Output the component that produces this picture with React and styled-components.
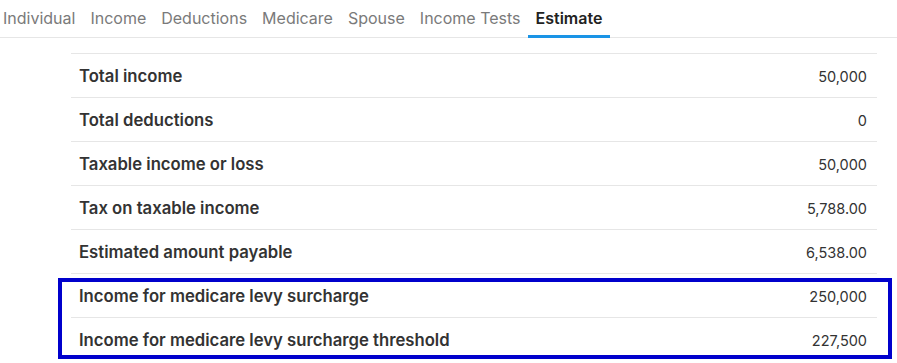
import styled, { createGlobalStyle } from "styled-components";

const GlobalStyle = createGlobalStyle`
  body {
    margin: 0;
    background: #fff;
    font-family: Inter, "Noto Sans", sans-serif;
    color: #333;
  }
`

const Page = styled.div`
  width: 897px;
  height: 363px;
  overflow: hidden;
`

const TabBar = styled.nav`
  display: flex;
  height: 37px;
  border-bottom: 1px solid #e6e6e6;
`

const Tab = styled.div`
  display: flex;
  align-items: center;
  padding: 0 7.5px;
  margin-left: ${props => props.first ? '-4.5px' : '0'};
  font-size: 16px;
  color: ${props => props.active ? '#222' : '#7a7a7a'};
  font-weight: ${props => props.active ? 600 : 400};
  border-bottom: 3px solid ${props => props.active ? '#1a94e6' : 'transparent'};
  margin-bottom: -1px;
`

const Content = styled.div`
  position: relative;
  margin: 15px 20px 0 71px;
`

const Row = styled.div`
  box-sizing: border-box;
  display: flex;
  align-items: center;
  justify-content: space-between;
  height: 44px;
  border-top: 1px solid #e6e6e6;
  padding: 1px 10px 0 8px;
`

const Label = styled.span`
  font-size: 16.7px;
  font-weight: 600;
  color: #333;
`

const Value = styled.span`
  font-size: 14.5px;
  color: #333;
`

const Highlight = styled.div`
  position: absolute;
  left: -13px;
  right: -15px;
  top: 225px;
  height: 73px;
  border: 4px solid #0000cc;
`

const tabs = ['Individual', 'Income', 'Deductions', 'Medicare', 'Spouse', 'Income Tests', 'Estimate'];

const rows = [
  ['Total income', '50,000'],
  ['Total deductions', '0'],
  ['Taxable income or loss', '50,000'],
  ['Tax on taxable income', '5,788.00'],
  ['Estimated amount payable', '6,538.00'],
  ['Income for medicare levy surcharge', '250,000'],
  ['Income for medicare levy surcharge threshold', '227,500'],
];

export default function App() {
  return <>
    <GlobalStyle />
    <Page>
      <TabBar>
        {tabs.map((t, i) => (
          <Tab key={t} first={i === 0} active={t === 'Estimate'}>{t}</Tab>
        ))}
      </TabBar>
      <Content>
        {rows.map(([label, value]) => (
          <Row key={label}>
            <Label>{label}</Label>
            <Value>{value}</Value>
          </Row>
        ))}
        <Highlight />
      </Content>
    </Page>
  </>
}
